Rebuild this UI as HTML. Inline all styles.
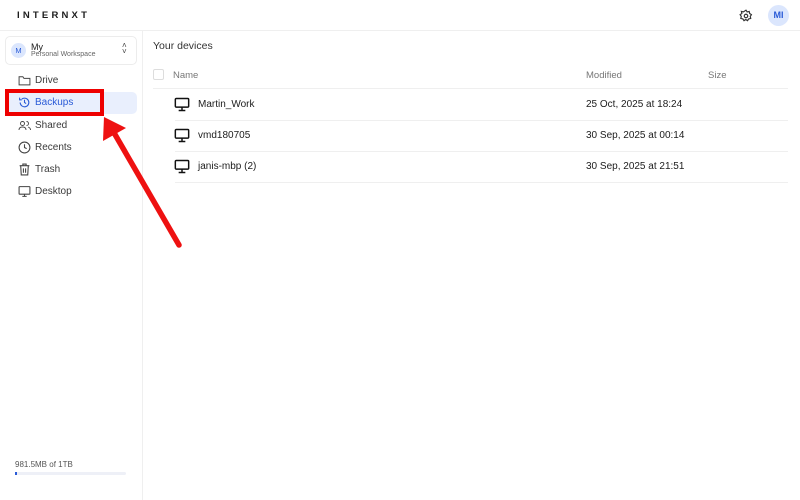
<!DOCTYPE html>
<html><head><meta charset="utf-8"><style>
*{margin:0;padding:0;box-sizing:border-box}
body{width:800px;height:500px;background:#fff;font-family:"Liberation Sans",sans-serif;position:relative;overflow:hidden;color:#1c1c1c}
.a{position:absolute}
.t{font-size:9px;white-space:nowrap}
.nav{position:absolute;left:35px;font-size:10px;color:#3a3a3a}
.line{position:absolute;height:1px;background:#efefef}
</style></head><body>
<div class="a" style="left:17px;top:10px;font-size:9.5px;font-weight:bold;letter-spacing:3.2px">INTERNXT</div>
<svg class="a" style="left:739px;top:9px" width="14" height="14" viewBox="0 0 24 24" fill="none" stroke="#333" stroke-width="2"><circle cx="12" cy="12" r="3"/><path d="M12 2l2 3 3.5-.8.8 3.5 3 2-2 3 .8 3.5-3.5.8-2 3-3-2-3 2-2-3-3.5-.8.8-3.5-2-3 3-2-.8-3.5 3.5.8z"/></svg>
<div class="a" style="left:768px;top:5px;width:21px;height:21px;border-radius:50%;background:#dbe6fd;color:#2a5bd7;font-size:9px;font-weight:bold;text-align:center;line-height:21px">MI</div>
<div class="line" style="left:0;top:30px;width:800px"></div>
<div class="a" style="left:142px;top:31px;width:1px;height:469px;background:#efefef"></div>

<div class="a" style="left:5px;top:36px;width:132px;height:29px;border:1px solid #ececec;border-radius:5px"></div>
<div class="a" style="left:11px;top:43px;width:15px;height:15px;border-radius:50%;background:#dbe6fd;color:#2a5bd7;font-size:7.5px;text-align:center;line-height:15px">M</div>
<div class="a t" style="left:31px;top:42px;font-size:9px">My</div>
<div class="a t" style="left:31px;top:51px;font-size:7px;color:#666">Personal Workspace</div>
<div class="a" style="left:122px;top:43px;font-size:8px;color:#444;line-height:6px">˄<br>˅</div>

<div class="a" style="left:5px;top:92px;width:132px;height:22px;background:#e9effd;border-radius:5px"></div>
<svg class="a" style="left:18px;top:74px" width="13" height="13" viewBox="0 0 24 24" fill="none" stroke="#444" stroke-width="1.8"><path d="M2 5h7l2 3h11v12H2z"/></svg>
<div class="nav" style="top:75px">Drive</div>
<svg class="a" style="left:18px;top:96px" width="13" height="13" viewBox="0 0 24 24" fill="none" stroke="#2a5bd7" stroke-width="2"><path d="M4 12a8 8 0 1 0 3-6.3M3 3v4h4M12 7v5l3 2"/></svg>
<div class="nav" style="top:97px;color:#2a5bd7">Backups</div>
<svg class="a" style="left:18px;top:119px" width="14" height="13" viewBox="0 0 28 24" fill="none" stroke="#444" stroke-width="1.8"><circle cx="9" cy="8" r="4"/><path d="M2 21c0-4 3-6 7-6s7 2 7 6M17 4a4 4 0 0 1 0 8M20 15c3 1 5 3 5 6"/></svg>
<div class="nav" style="top:120px">Shared</div>
<svg class="a" style="left:18px;top:141px" width="13" height="13" viewBox="0 0 24 24" fill="none" stroke="#444" stroke-width="2"><circle cx="12" cy="12" r="10"/><path d="M12 6v6l4 2"/></svg>
<div class="nav" style="top:142px">Recents</div>
<svg class="a" style="left:18px;top:163px" width="13" height="13" viewBox="0 0 24 24" fill="none" stroke="#444" stroke-width="2"><path d="M3 5h18M9 5V2h6v3M5 5l1 17h12l1-17M10 10v8M14 10v8"/></svg>
<div class="nav" style="top:164px">Trash</div>
<svg class="a" style="left:18px;top:185px" width="13" height="13" viewBox="0 0 24 24" fill="none" stroke="#444" stroke-width="2"><rect x="2" y="3" width="20" height="14" rx="1"/><path d="M8 21h8M12 17v4"/></svg>
<div class="nav" style="top:186px">Desktop</div>

<div class="a t" style="left:15px;top:460px;font-size:8px;color:#555">981.5MB of 1TB</div>
<div class="a" style="left:15px;top:472px;width:111px;height:3px;background:#eef0f7;border-radius:2px"></div>
<div class="a" style="left:15px;top:472px;width:2px;height:3px;background:#2a5bd7"></div>

<div class="a" style="left:153px;top:40px;font-size:10.5px;color:#333">Your devices</div>
<div class="a" style="left:153px;top:69px;width:11px;height:11px;border:1px solid #ddd;border-radius:2px"></div>
<div class="a t" style="left:173px;top:70px;color:#777;font-size:9.5px">Name</div>
<div class="a t" style="left:586px;top:70px;color:#777;font-size:9.5px">Modified</div>
<div class="a t" style="left:708px;top:70px;color:#777;font-size:9.5px">Size</div>
<div class="line" style="left:153px;top:88px;width:635px"></div>
<div class="line" style="left:175px;top:120px;width:613px"></div>
<div class="line" style="left:175px;top:151px;width:613px"></div>
<div class="line" style="left:175px;top:182px;width:613px"></div>

<svg class="a" style="left:174px;top:97px" width="16" height="15" viewBox="0 0 24 22" fill="none" stroke="#111" stroke-width="2.2"><rect x="2" y="2" width="20" height="13" rx="1.5"/><path d="M7 20h10M12 15v5"/></svg>
<div class="a t" style="left:198px;top:99px;font-size:10px">Martin_Work</div>
<div class="a t" style="left:586px;top:99px;font-size:10px">25 Oct, 2025 at 18:24</div>
<svg class="a" style="left:174px;top:128px" width="16" height="15" viewBox="0 0 24 22" fill="none" stroke="#111" stroke-width="2.2"><rect x="2" y="2" width="20" height="13" rx="1.5"/><path d="M7 20h10M12 15v5"/></svg>
<div class="a t" style="left:198px;top:130px;font-size:10px">vmd180705</div>
<div class="a t" style="left:586px;top:130px;font-size:10px">30 Sep, 2025 at 00:14</div>
<svg class="a" style="left:174px;top:159px" width="16" height="15" viewBox="0 0 24 22" fill="none" stroke="#111" stroke-width="2.2"><rect x="2" y="2" width="20" height="13" rx="1.5"/><path d="M7 20h10M12 15v5"/></svg>
<div class="a t" style="left:198px;top:161px;font-size:10px">janis-mbp (2)</div>
<div class="a t" style="left:586px;top:161px;font-size:10px">30 Sep, 2025 at 21:51</div>

<div class="a" style="left:5px;top:89px;width:99px;height:27px;border:4px solid #ee0000"></div>
<svg class="a" style="left:0;top:0" width="800" height="500"><line x1="179" y1="245" x2="113" y2="131" stroke="#ee1111" stroke-width="5.5" stroke-linecap="round"/><polygon points="104,117 103,141 126,128" fill="#ee1111"/></svg>
</body></html>
